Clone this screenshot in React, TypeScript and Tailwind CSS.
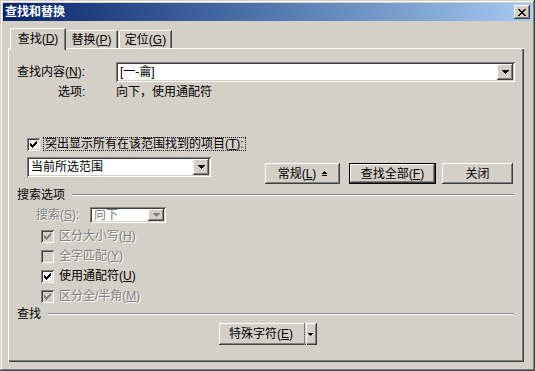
import React from "react";

// classic 3D edges
const raised =
  "shadow-[inset_-1px_-1px_#404040,inset_1px_1px_#ffffff,inset_-2px_-2px_#808080,inset_2px_2px_#d4d0c8]";
const sunken =
  "shadow-[inset_1px_1px_#808080,inset_-1px_-1px_#ffffff,inset_2px_2px_#404040,inset_-2px_-2px_#d4d0c8]";
const grey = "text-[#808080] [text-shadow:1px_1px_0_#ffffff]";

function DownArrow({ disabled = false }: { disabled?: boolean }) {
  return (
    <svg width="7" height="4" viewBox="0 0 7 4" shapeRendering="crispEdges">
      <path
        d="M0 0h7v1h-1v1h-1v1h-1v1h-1v-1h-1v-1h-1v-1h-1z"
        fill={disabled ? "#808080" : "#000000"}
      />
    </svg>
  );
}

function CheckMark({ disabled = false }: { disabled?: boolean }) {
  return (
    <svg width="7" height="7" viewBox="0 0 7 7" shapeRendering="crispEdges">
      <path
        d="M6 0h1v1h-1z M5 1h2v1h-2z M0 2h1v1h-1z M4 2h3v1h-3z M0 3h2v1h-2z M3 3h3v1h-3z M0 4h5v1h-5z M1 5h3v1h-3z M2 6h1v1h-1z"
        fill={disabled ? "#808080" : "#000000"}
      />
    </svg>
  );
}

function Checkbox({ checked, disabled = false }: { checked: boolean; disabled?: boolean }) {
  return (
    <div
      className={`w-[13px] h-[13px] shrink-0 flex items-center justify-center ${sunken} ${
        disabled ? "bg-[#d4d0c8]" : "bg-white"
      }`}
    >
      {checked && <CheckMark disabled={disabled} />}
    </div>
  );
}

function Combo({
  text,
  width,
  height,
  disabled = false,
}: {
  text: string;
  width: string;
  height: string;
  disabled?: boolean;
}) {
  return (
    <div className={`${width} ${height} bg-white p-[2px] flex shrink-0 ${sunken}`}>
      <div className={`flex-1 flex items-center pl-[2px] ${disabled ? "text-[#808080]" : ""}`}>{text}</div>
      <div className={`w-[16px] h-full bg-[#d4d0c8] flex items-center justify-center ${raised}`}>
        <DownArrow disabled={disabled} />
      </div>
    </div>
  );
}

function Acc({ label, k }: { label: string; k: string }) {
  return (
    <>
      {label}(<span className="underline">{k}</span>)
    </>
  );
}

function Button({
  children,
  width,
  isDefault = false,
}: {
  children: React.ReactNode;
  width: string;
  isDefault?: boolean;
}) {
  if (isDefault) {
    return (
      <div className={`${width} h-[21px] border border-black flex`}>
        <div className={`flex-1 flex items-center justify-center ${raised}`}>{children}</div>
      </div>
    );
  }
  return <div className={`${width} h-[21px] flex items-center justify-center ${raised}`}>{children}</div>;
}

function GroupHeader({ title }: { title: string }) {
  return (
    <div className="flex items-center h-[12px] pr-[10px]">
      <span>{title}</span>
      <div className="flex-1 ml-[7px] border-t border-[#808080] border-b border-b-white" />
    </div>
  );
}

function OptionRow({
  label,
  k,
  checked,
  disabled = false,
}: {
  label: string;
  k: string;
  checked: boolean;
  disabled?: boolean;
}) {
  return (
    <div className="h-[20px] flex items-center pl-[24px]">
      <Checkbox checked={checked} disabled={disabled} />
      <span className={`ml-[5px] ${disabled ? grey : ""}`}>
        <Acc label={label} k={k} />
      </span>
    </div>
  );
}

export default function App() {
  return (
    <div className="w-[535px] h-[371px] bg-[#d4d0c8] p-[3px] flex flex-col font-['Liberation_Sans','Noto_Sans_CJK_SC',sans-serif] text-[12px] leading-[12px] text-black shadow-[inset_-1px_-1px_#404040,inset_1px_1px_#d4d0c8,inset_-2px_-2px_#808080,inset_2px_2px_#ffffff]">
      {/* Title bar */}
      <div className="h-[18px] bg-linear-to-r from-[#0a246a] to-[#a6caf0] flex items-center justify-between pl-[2px] pr-[2px]">
        <span className="text-white font-bold">查找和替换</span>
        <div className={`w-[16px] h-[14px] bg-[#d4d0c8] flex items-center justify-center ${raised}`}>
          <svg width="8" height="7" viewBox="0 0 8 7" shapeRendering="crispEdges">
            <path
              d="M0 0h2v1h-2z M6 0h2v1h-2z M1 1h2v1h-2z M5 1h2v1h-2z M2 2h4v1h-4z M3 3h2v1h-2z M2 4h4v1h-4z M1 5h2v1h-2z M5 5h2v1h-2z M0 6h2v1h-2z M6 6h2v1h-2z"
              fill="#000000"
            />
          </svg>
        </div>
      </div>

      {/* Tabs */}
      <div className="mt-[7px] h-[22px] -mb-[2px] flex items-start pl-[7px] relative z-10">
        <div className="w-[56px] h-[22px] bg-[#d4d0c8] border-l border-t border-white rounded-tl-[2px] shadow-[inset_-1px_0_#808080,-0px_0_#404040] border-r border-r-[#404040] flex items-center justify-center pb-[2px]">
          <Acc label="查找" k="D" />
        </div>
        <div className="w-[52px] h-[18px] mt-[2px] border-t border-white shadow-[inset_-1px_0_#808080] border-r border-r-[#404040] flex items-center justify-center">
          <Acc label="替换" k="P" />
        </div>
        <div className="w-[53px] h-[18px] mt-[2px] ml-[1px] border-l border-t border-white shadow-[inset_-1px_0_#808080] border-r border-r-[#404040] rounded-tl-[2px] flex items-center justify-center">
          <Acc label="定位" k="G" />
        </div>
      </div>

      {/* Panel */}
      <div className="ml-[5px] w-[516px] h-[314px] pl-[9px] pt-[14px] flex flex-col shadow-[inset_1px_1px_#ffffff,inset_-1px_-1px_#404040,inset_-2px_-2px_#808080]">
        <div className="h-[20px] flex items-center">
          <span className="w-[99px] shrink-0">
            <Acc label="查找内容" k="N" />:
          </span>
          <Combo text="[一-龠]" width="w-[399px]" height="h-[20px]" />
        </div>

        <div className="h-[12px] mt-[4px] flex items-center">
          <span className="w-[99px] shrink-0 pl-[41px]">选项:</span>
          <span>向下，使用通配符</span>
        </div>

        <div className="h-[14px] mt-[39px] flex items-center pl-[10px]">
          <Checkbox checked />
          <span className="ml-[3px] h-[14px] px-[1px] flex items-center border border-dotted border-black">
            突出显示所有在该范围找到的项目(<span className="underline">T</span>):
          </span>
        </div>

        <div className="mt-[6px] flex items-start pl-[10px]">
          <Combo text="当前所选范围" width="w-[184px]" height="h-[20px]" />
          <div className="mt-[6px] ml-[54px] flex">
            <Button width="w-[75px]">
              <span>
                <Acc label="常规" k="L" />
              </span>
              <svg width="5" height="5" viewBox="0 0 5 5" className="ml-[6px]" shapeRendering="crispEdges">
                <path d="M2 0h1v1h1v1h1v1h-5v-1h1v-1h1z M0 4h5v1h-5z" fill="#000000" />
              </svg>
            </Button>
            <div className="ml-[9px]">
              <Button width="w-[87px]" isDefault>
                <Acc label="查找全部" k="F" />
              </Button>
            </div>
            <div className="ml-[6px]">
              <Button width="w-[71px]">关闭</Button>
            </div>
          </div>
        </div>

        <div className="mt-[5px]">
          <GroupHeader title="搜索选项" />
        </div>

        <div className="mt-[6px] h-[16px] flex items-center pl-[19px]">
          <span className={`w-[54px] shrink-0 ${grey}`}>
            <Acc label="搜索" k="S" />:
          </span>
          <Combo text="向下" width="w-[76px]" height="h-[16px]" disabled />
        </div>

        <div className="mt-[3px] flex flex-col">
          <OptionRow label="区分大小写" k="H" checked disabled />
          <OptionRow label="全字匹配" k="Y" checked={false} disabled />
          <OptionRow label="使用通配符" k="U" checked />
          <OptionRow label="区分全/半角" k="M" checked disabled />
        </div>

        <div className="mt-[2px]">
          <GroupHeader title="查找" />
        </div>

        <div className="mt-[3px] flex justify-center pr-[6px]">
          <div className={`w-[98px] h-[22px] flex ${raised}`}>
            <div className="flex-1 flex items-center justify-center border-r border-r-[#808080] mr-[1px]">
              <Acc label="特殊字符" k="E" />
            </div>
            <div className="w-[9px] flex items-center justify-center border-l border-white mr-[2px]">
              <svg width="5" height="3" viewBox="0 0 5 3" shapeRendering="crispEdges">
                <path d="M0 0h5v1h-1v1h-1v1h-1v-1h-1v-1h-1z" fill="#000000" />
              </svg>
            </div>
          </div>
        </div>
      </div>
    </div>
  );
}
